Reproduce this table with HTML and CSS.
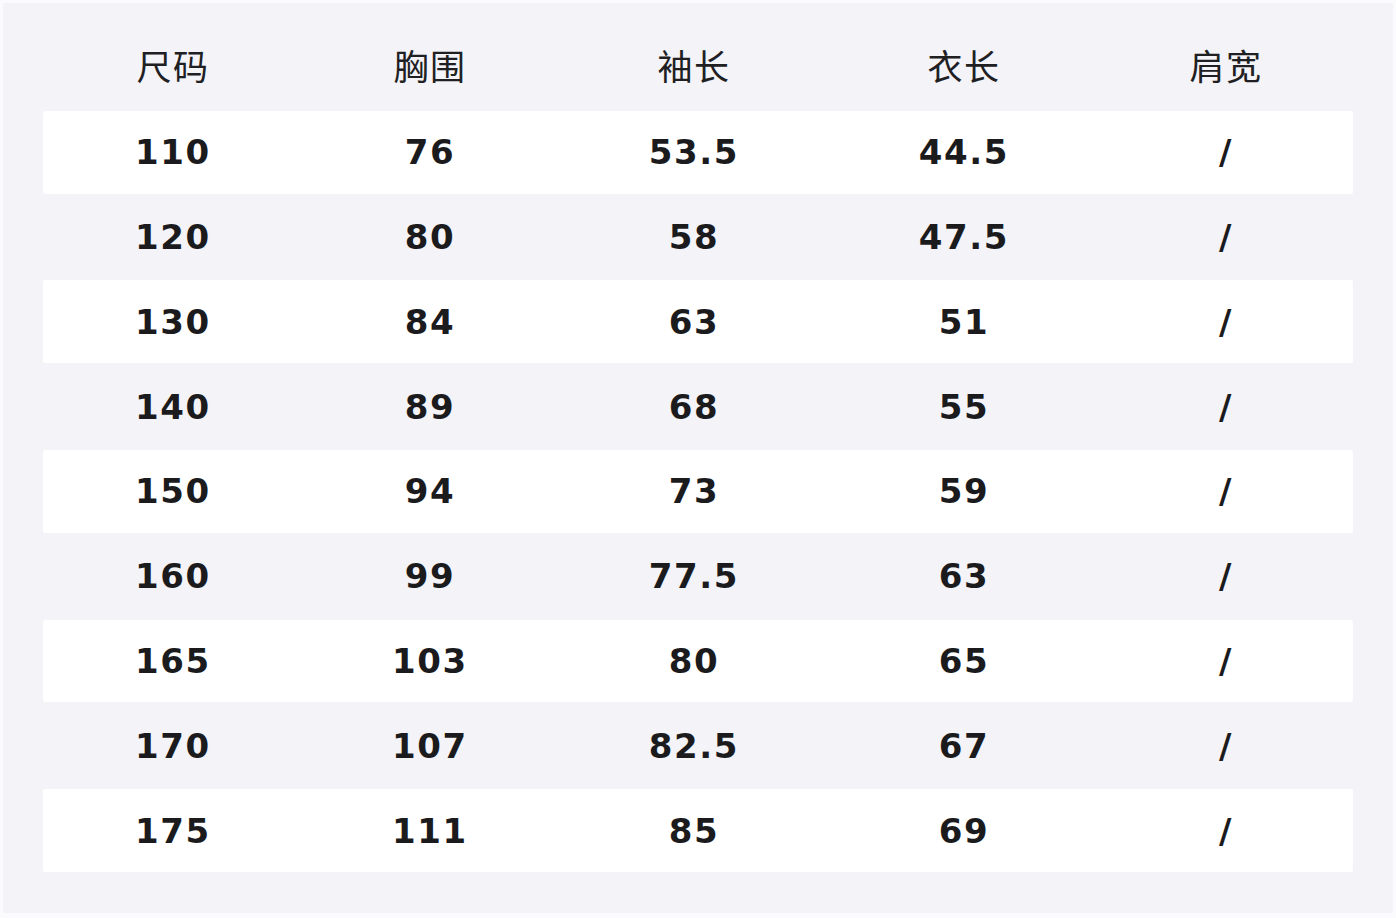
FILE: index.html
```html
<!DOCTYPE html>
<html lang="zh">
<head>
<meta charset="utf-8">
<link rel="stylesheet" href="styles.css">
</head>
<body>
<div class="sheet">
  <div class="row head">
    <div class="cell">尺码</div><div class="cell">胸围</div><div class="cell">袖长</div><div class="cell">衣长</div><div class="cell">肩宽</div>
  </div>
  <div class="row w"><div class="cell">110</div><div class="cell">76</div><div class="cell">53.5</div><div class="cell">44.5</div><div class="cell">/</div></div>
  <div class="row"><div class="cell">120</div><div class="cell">80</div><div class="cell">58</div><div class="cell">47.5</div><div class="cell">/</div></div>
  <div class="row w"><div class="cell">130</div><div class="cell">84</div><div class="cell">63</div><div class="cell">51</div><div class="cell">/</div></div>
  <div class="row"><div class="cell">140</div><div class="cell">89</div><div class="cell">68</div><div class="cell">55</div><div class="cell">/</div></div>
  <div class="row w"><div class="cell">150</div><div class="cell">94</div><div class="cell">73</div><div class="cell">59</div><div class="cell">/</div></div>
  <div class="row"><div class="cell">160</div><div class="cell">99</div><div class="cell">77.5</div><div class="cell">63</div><div class="cell">/</div></div>
  <div class="row w"><div class="cell">165</div><div class="cell">103</div><div class="cell">80</div><div class="cell">65</div><div class="cell">/</div></div>
  <div class="row"><div class="cell">170</div><div class="cell">107</div><div class="cell">82.5</div><div class="cell">67</div><div class="cell">/</div></div>
  <div class="row w"><div class="cell">175</div><div class="cell">111</div><div class="cell">85</div><div class="cell">69</div><div class="cell">/</div></div>
</div>
</body>
</html>
```
FILE: styles.css
```css
html, body {
  margin: 0;
  padding: 0;
  background: #fbfbfd;
}
body {
  padding: 3px;
  width: 1390px;
  height: 912px;
  box-sizing: content-box;
}
.sheet {
  background: #f3f3f8;
  width: 1390px;
  height: 910px;
  box-sizing: border-box;
  padding: 22px 40px 40px;
  display: flex;
  flex-direction: column;
}
.row {
  display: grid;
  grid-template-columns: 258px 256px 272px 268px 256px;
  height: 85px;
  align-items: center;
  font-family: "DejaVu Sans", sans-serif;
  font-weight: bold;
  font-size: 34px;
  letter-spacing: 1.6px;
  color: #1b1b1d;
}
.row.w {
  background: #ffffff;
  border-radius: 2px;
  height: 83px;
  margin: 1px 0;
}
.cell {
  text-align: center;
  padding-left: 2px;
}
.head {
  font-family: "Noto Sans CJK SC", sans-serif;
  font-weight: normal;
  font-size: 35px;
  letter-spacing: 1.5px;
  color: #202022;
  padding-bottom: 6px;
  box-sizing: border-box;
}
```
